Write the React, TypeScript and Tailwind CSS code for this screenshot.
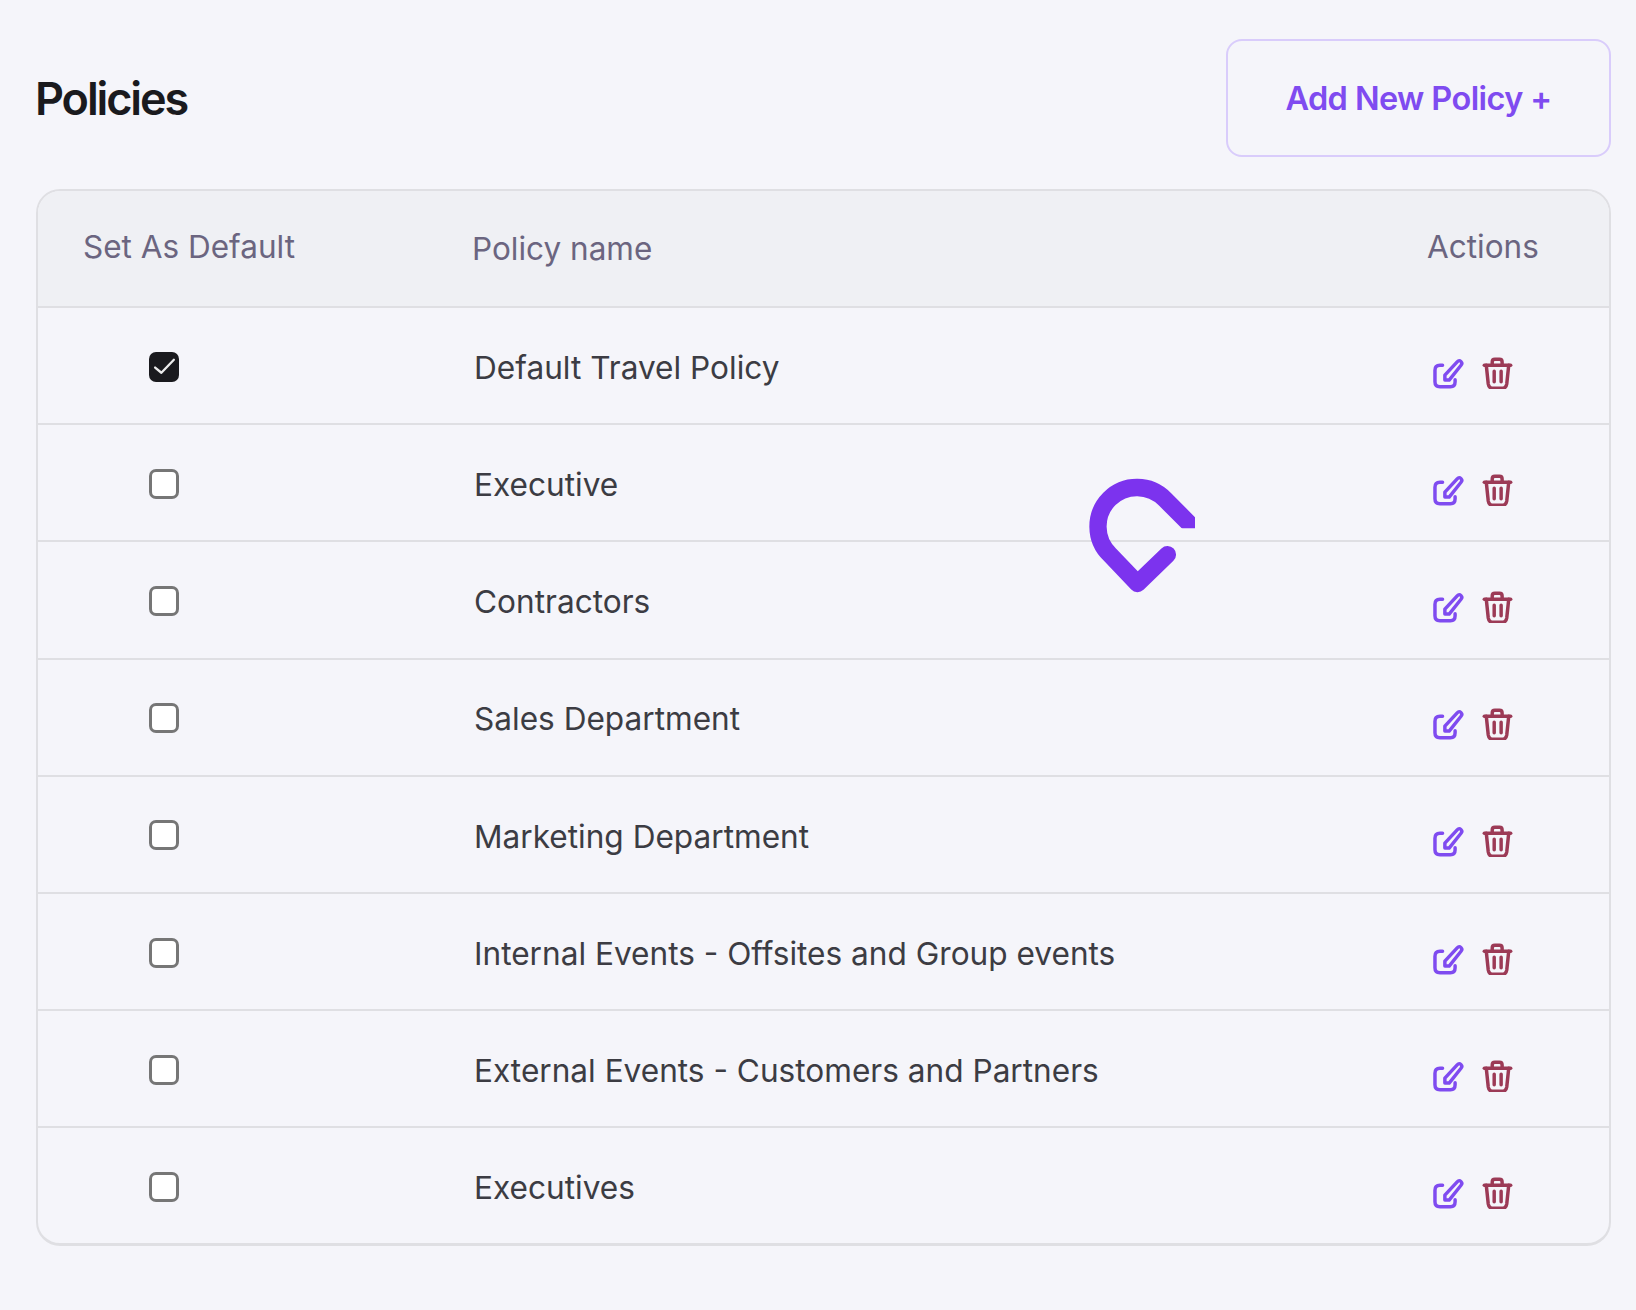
const policies = [
  "Default Travel Policy",
  "Executive",
  "Contractors",
  "Sales Department",
  "Marketing Department",
  "Internal Events - Offsites and Group events",
  "External Events - Customers and Partners",
  "Executives",
];

function EditIcon() {
  return (
    <svg viewBox="66 50 100 100" className="h-[33px] w-[33px]" fill="none" stroke="#7f4bf0" strokeWidth="10.5" strokeLinecap="round" strokeLinejoin="round">
      <path d="M98 78H90Q75 78 75 93V128Q75 143 90 143H122Q136 143 136 128V122" />
      <path d="M105 123V108L143 67Q148 61 154 67Q159 72 154 78L118 123Z" />
    </svg>
  );
}

function TrashIcon() {
  return (
    <svg viewBox="214 50 100 100" className="h-[33px] w-[33px]" fill="none" stroke="#9c3a56" strokeWidth="10.5" strokeLinecap="round" strokeLinejoin="round">
      <path d="M224 78H304" />
      <path d="M248 78V68Q248 60 256 60H270Q278 60 278 68V78" />
      <path d="M230 78L236 135Q238 148 250 148H278Q290 148 292 135L298 78" />
      <path d="M254 96V128M275 96V128" />
    </svg>
  );
}

function Checkbox({ checked }: { checked: boolean }) {
  return (
    <span
      className={
        checked
          ? "flex h-[30px] w-[30px] items-center justify-center rounded-[7px] bg-[#1a1a1e]"
          : "flex h-[30px] w-[30px] items-center justify-center rounded-[7px] border-[3px] border-[#767676] bg-white"
      }
    >
      {checked && (
        <svg viewBox="0 0 24 24" className="h-[25px] w-[25px]" fill="none" stroke="#ececec" strokeWidth="2.2" strokeLinecap="round" strokeLinejoin="round">
          <path d="M3 13L9 18L21 5.5" />
        </svg>
      )}
    </span>
  );
}

function Logo() {
  return (
    <svg viewBox="80 40 325 360" className="absolute left-[1087px] top-[474px] h-[120px] w-[108px]" fill="none">
      <defs>
        <clipPath id="logo-cut">
          <polygon points="0,0 405,0 405,203 352,203 352,420 0,420" />
        </clipPath>
      </defs>
      <path
        clipPath="url(#logo-cut)"
        d="M440 241L315 116A117.4 117.4 0 1 0 149 282L232 369L322 282"
        stroke="#7c33ee"
        strokeWidth="52"
        strokeLinecap="round"
        strokeLinejoin="round"
      />
    </svg>
  );
}

export default function App() {
  return (
    <div className="relative min-h-screen bg-[#f5f5fa] pt-[39px] pr-[25px] pb-[62px] pl-[36px] font-['Inter',sans-serif]">
      <div className="flex items-center justify-between">
        <h1 className="-ml-px pt-[2px] text-[45px] font-semibold tracking-[-2.1px] text-[#1a1a1e]">Policies</h1>
        <button className="flex h-[118px] w-[385px] items-center justify-center rounded-[16px] border-2 border-[#d9ccfb] pt-[3px] text-[32.5px] font-semibold tracking-[-0.6px] text-[#7f4bf0]">
          Add New Policy +
        </button>
      </div>

      <div className="mt-[32px] overflow-hidden rounded-[24px] border-2 border-b-[3px] border-[#dfdfe3]">
        <div className="grid h-[117px] grid-cols-[434px_1fr_182px] items-center border-b-2 border-[#dfdfe3] bg-[#eff0f4] text-[31.5px] text-[#6b6580]">
          <span className="pb-[4px] pl-[45px]">Set As Default</span>
          <span className="pt-[1px]">Policy name</span>
          <span className="pb-[4px]">Actions</span>
        </div>
        {policies.map((name, i) => (
          <div
            key={name}
            className={
              i === policies.length - 1
                ? "grid h-[115px] grid-cols-[436px_1fr_182px] items-center text-[31.6px] text-[#3c3c43]"
                : "grid h-[117.2px] grid-cols-[436px_1fr_182px] items-center border-b-2 border-[#dfdfe3] text-[31.6px] text-[#3c3c43]"
            }
          >
            <span className="pt-[2px] pl-[111px]">
              <Checkbox checked={i === 0} />
            </span>
            <span className="pt-[4px]">{name}</span>
            <span className="flex items-center gap-[16px] pt-[13px] pl-[5px]">
              <EditIcon />
              <TrashIcon />
            </span>
          </div>
        ))}
      </div>

      <Logo />
    </div>
  );
}
